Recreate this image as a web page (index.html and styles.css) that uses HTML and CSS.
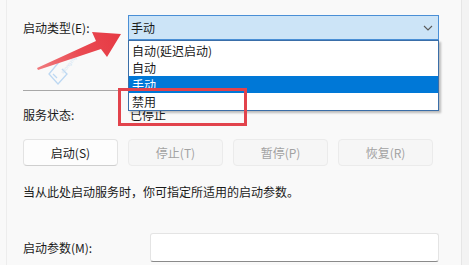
FILE: index.html
```html
<!DOCTYPE html>
<html lang="zh-CN">
<head>
<meta charset="utf-8">
<link rel="stylesheet" href="styles.css">
</head>
<body>
<div class="frame">
  <div class="panel">
    <div class="row type-row">
      <span class="label">启动类型(E):</span>
      <div class="combo">
        <span class="combo-text">手动</span>
        <svg class="chev" width="10" height="6" viewBox="0 0 10 6"><path d="M1 1 L5 5 L9 1" fill="none" stroke="#5a5a5a" stroke-width="1.1"/></svg>
        <ul class="list">
          <li>自动(延迟启动)</li>
          <li>自动</li>
          <li class="sel">手动</li>
          <li>禁用</li>
        </ul>
      </div>
    </div>
    <div class="sep"></div>
    <div class="row status-row">
      <span class="label">服务状态:</span>
      <span class="value">已停止</span>
    </div>
    <div class="buttons">
      <button class="btn">启动(S)</button>
      <button class="btn off">停止(T)</button>
      <button class="btn off">暂停(P)</button>
      <button class="btn off">恢复(R)</button>
    </div>
    <p class="desc">当从此处启动服务时，你可指定所适用的启动参数。</p>
    <div class="row param-row">
      <span class="label">启动参数(M):</span>
      <div class="input"></div>
    </div>
  </div>
  <div class="redbox"></div>
  <svg class="wm" width="50" height="50" viewBox="0 0 50 50">
    <path d="M16 20 L6 32 L15 42 L24 32 L19 27 M10 32 L14 36" fill="none" stroke="#a9cdf0" stroke-width="1.3"/>
    <text x="20" y="32" font-size="5" fill="#c6dcf2" transform="rotate(-50 20 32)" font-family="Liberation Sans, sans-serif">xitongzhijia</text>
  </svg>
  <svg class="arrow" width="469" height="265" viewBox="0 0 469 265">
    <defs>
      <linearGradient id="ag" x1="37" y1="68" x2="120" y2="34" gradientUnits="userSpaceOnUse">
        <stop offset="0" stop-color="#f07a7e"/>
        <stop offset="0.5" stop-color="#ea4a52"/>
        <stop offset="1" stop-color="#e63a44"/>
      </linearGradient>
    </defs>
    <polygon points="37,68 96,41 92,32 121,34 107,57 101,49 38,70" fill="url(#ag)"/>
  </svg>
  <div class="edge-r"></div>
</div>
</body>
</html>
```

FILE: styles.css
```css
* { box-sizing: border-box; }
html, body { margin: 0; padding: 0; }
body {
  width: 469px;
  height: 265px;
  overflow: hidden;
  background: #f9f9f9;
  font-family: "Noto Sans CJK SC", "Noto Sans", sans-serif;
  font-size: 12px;
  color: #1a1a1a;
}
.frame {
  position: relative;
  width: 469px;
  height: 265px;
  border-left: 1px solid #ededed;
  margin-left: 6px;
}
.panel {
  padding: 15px 0 0 16px;
  width: 433px;
}
.row {
  display: flex;
  align-items: center;
}
.label {
  width: 105px;
  line-height: 16px;
  flex: none;
}
.type-row { height: 25px; }
.combo {
  position: relative;
  width: 311px;
  height: 25px;
  background: #cce4f7;
  border: 1px solid #4a8fd6;
  display: flex;
  align-items: center;
  padding-left: 2px;
}
.combo-text { flex: 1; line-height: 16px; }
.chev { margin-right: 5px; margin-top: 1px; }
.list {
  position: absolute;
  left: -1px;
  top: 24px;
  width: 311px;
  margin: 0;
  padding: 1px 0 0;
  list-style: none;
  background: #fff;
  border: 1px solid #3a6ea8;
  box-shadow: 2px 2px 2px rgba(0,0,0,0.25);
  z-index: 2;
}
.list li {
  height: 17px;
  line-height: 17px;
  padding-left: 3px;
}
.list li.sel {
  background: #0078d7;
  color: #fff;
}
.sep {
  margin-top: 50px;
  height: 1px;
  background: #a8a8a8;
  width: 100px;
}
.status-row {
  margin-top: 16px;
  height: 16px;
}
.status-row .label { width: 107px; }
.value { line-height: 16px; }
.buttons {
  margin-top: 16px;
  display: flex;
  gap: 10px;
}
.btn {
  width: 95px;
  height: 27px;
  border: 1px solid #e3e3e3;
  border-bottom-color: #cfcfcf;
  border-radius: 4px;
  background: #fdfdfd;
  font-family: inherit;
  font-size: 12px;
  color: #1a1a1a;
  padding: 0;
}
.btn.off {
  background: #f6f6f6;
  border-color: #ebebeb;
  color: #a2a2a2;
}
.desc {
  margin: 18px 0 0;
  line-height: 16px;
}
.param-row {
  margin-top: 33px;
}
.param-row .label { width: 127px; }
.input {
  width: 289px;
  height: 29px;
  background: #fff;
  border: 1px solid #e4e4e4;
  border-bottom: 1px solid #8a8a8a;
  border-radius: 3px;
}
.redbox {
  position: absolute;
  left: 111px;
  top: 88px;
  width: 129px;
  height: 38px;
  border: 3px solid #e2434c;
  z-index: 3;
}
.arrow {
  position: absolute;
  left: -7px;
  top: 0;
  z-index: 4;
  pointer-events: none;
}
.wm {
  position: absolute;
  left: 36px;
  top: 42px;
  z-index: 1;
  opacity: 0.75;
}
.edge-r {
  position: absolute;
  left: 454px;
  top: 0;
  width: 10px;
  height: 265px;
  border-left: 1px solid #e6e6e6;
  background: #f3f3f3;
}
```
